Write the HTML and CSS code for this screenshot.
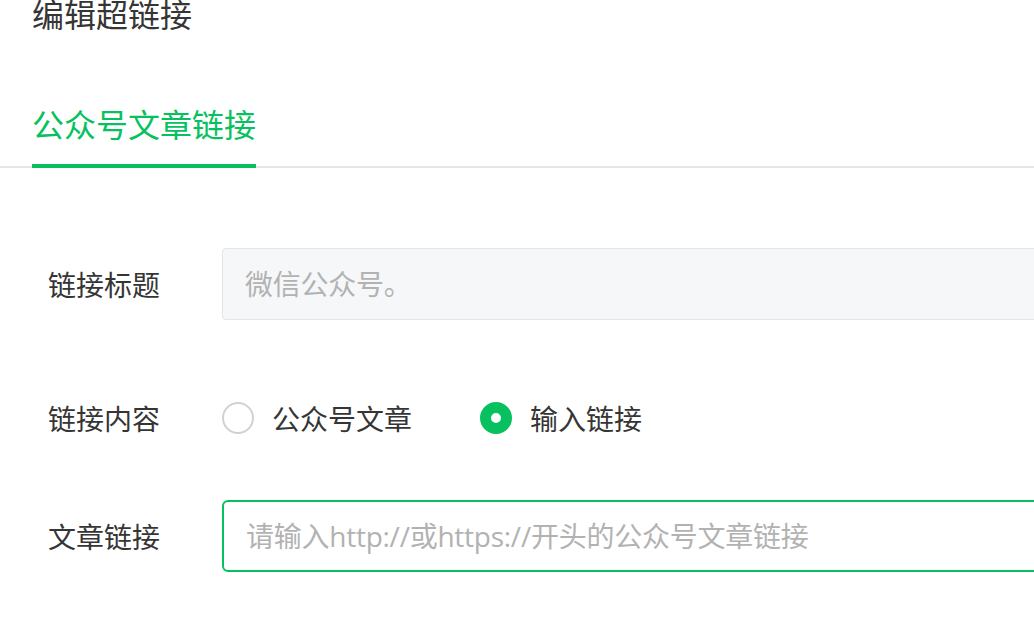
FILE: index.html
```html
<!DOCTYPE html>
<html>
<head>
<meta charset="utf-8">
<title>编辑超链接</title>
<link rel="stylesheet" href="styles.css">
</head>
<body>

<h1 class="title">编辑超链接</h1>

<div class="tabs">
  <div class="tab active">公众号文章链接</div>
</div>

<form class="form">
  <div class="row row-title">
    <label class="label">链接标题</label>
    <input class="input input-readonly" type="text" placeholder="微信公众号。">
  </div>

  <div class="row row-type">
    <span class="label">链接内容</span>
    <div class="radios">
      <label class="radio"><span class="radio-dot"></span>公众号文章</label>
      <label class="radio checked"><span class="radio-dot"></span>输入链接</label>
    </div>
  </div>

  <div class="row row-url">
    <label class="label">文章链接</label>
    <input class="input input-focus" type="text" placeholder="请输入http://或https://开头的公众号文章链接">
  </div>
</form>

</body>
</html>
```

FILE: styles.css
```css
:root {
  --green: #07c160;
  --text-color: #353535;
  --placeholder: #b2b2b2;
  --line: #e5e5e5;
}

body {
  margin: 0;
  overflow: hidden;
  background: #ffffff;
  color: var(--text-color);
  font-family: "Noto Sans CJK SC", "Liberation Sans", sans-serif;
}

.title {
  margin: -9px 0 0 32px;
  font-size: 32px;
  font-weight: normal;
  line-height: 44px;
}

/* tab bar */
.tabs {
  display: flex;
  margin-top: 66px;
  padding-left: 32px;
  border-bottom: 2px solid var(--line);
}

.tab {
  font-size: 32px;
  line-height: 44px;
  padding-bottom: 19px;
  margin-bottom: -2px;
  border-bottom: 4px solid transparent;
}

.tab.active {
  color: var(--green);
  border-bottom-color: var(--green);
}

/* form */
.form {
  width: 1100px;
  padding: 80px 0 0 48px;
}

.row {
  display: grid;
  grid-template-columns: 174px 1fr;
  align-items: center;
  min-height: 72px;
}

.row-title {
  margin-bottom: 62px;
}

.row-type {
  margin-bottom: 46px;
}

.label {
  font-size: 28px;
  line-height: 40px;
}

.input {
  box-sizing: border-box;
  width: 100%;
  height: 72px;
  padding: 0 22px;
  font-family: "Open Sans", "Noto Sans CJK SC", sans-serif;
  font-size: 28px;
  letter-spacing: -0.25px;
  color: var(--text-color);
  outline: none;
}

.input::placeholder {
  color: var(--placeholder);
}

.input-readonly {
  background: #f6f7f9;
  border: 1px solid #e3e4e7;
  border-radius: 4px;
}

.input-focus {
  background: #ffffff;
  border: 2px solid var(--green);
  border-radius: 6px;
}

/* radios */
.radios {
  display: flex;
  align-items: center;
  gap: 68px;
}

.radio {
  display: flex;
  align-items: center;
  gap: 18px;
  font-size: 28px;
  line-height: 40px;
}

.radio-dot {
  box-sizing: border-box;
  width: 32px;
  height: 32px;
  border: 2px solid #d0d1d5;
  border-radius: 50%;
  background: #ffffff;
}

.radio.checked .radio-dot {
  border: 11px solid var(--green);
}
```
